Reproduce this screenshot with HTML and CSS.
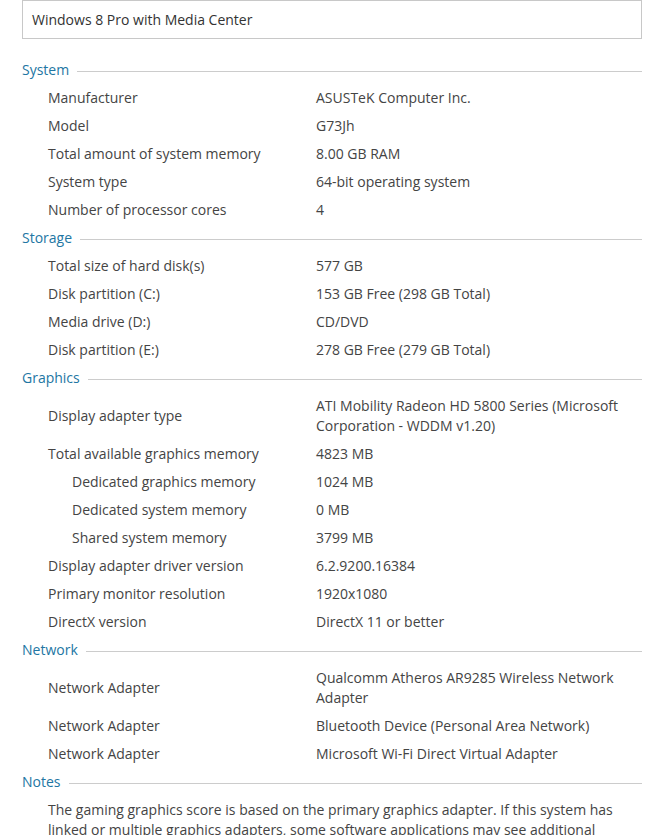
FILE: index.html
```html
<!DOCTYPE html>
<html>
<head>
<meta charset="utf-8">
<link rel="stylesheet" href="styles.css">
</head>
<body>
<div class="page">
  <div class="edition">Windows 8 Pro with Media Center</div>

  <section class="group">
    <div class="group-head"><span>System</span><i></i></div>
    <div class="row"><div class="k">Manufacturer</div><div class="v">ASUSTeK Computer Inc.</div></div>
    <div class="row"><div class="k">Model</div><div class="v">G73Jh</div></div>
    <div class="row"><div class="k">Total amount of system memory</div><div class="v">8.00 GB RAM</div></div>
    <div class="row"><div class="k">System type</div><div class="v">64-bit operating system</div></div>
    <div class="row"><div class="k">Number of processor cores</div><div class="v">4</div></div>
  </section>

  <section class="group">
    <div class="group-head"><span>Storage</span><i></i></div>
    <div class="row"><div class="k">Total size of hard disk(s)</div><div class="v">577 GB</div></div>
    <div class="row"><div class="k">Disk partition (C:)</div><div class="v">153 GB Free (298 GB Total)</div></div>
    <div class="row"><div class="k">Media drive (D:)</div><div class="v">CD/DVD</div></div>
    <div class="row"><div class="k">Disk partition (E:)</div><div class="v">278 GB Free (279 GB Total)</div></div>
  </section>

  <section class="group">
    <div class="group-head"><span>Graphics</span><i></i></div>
    <div class="row"><div class="k">Display adapter type</div><div class="v">ATI Mobility Radeon HD 5800 Series (Microsoft Corporation - WDDM v1.20)</div></div>
    <div class="row"><div class="k">Total available graphics memory</div><div class="v">4823 MB</div></div>
    <div class="row sub"><div class="k">Dedicated graphics memory</div><div class="v">1024 MB</div></div>
    <div class="row sub"><div class="k">Dedicated system memory</div><div class="v">0 MB</div></div>
    <div class="row sub"><div class="k">Shared system memory</div><div class="v">3799 MB</div></div>
    <div class="row"><div class="k">Display adapter driver version</div><div class="v">6.2.9200.16384</div></div>
    <div class="row"><div class="k">Primary monitor resolution</div><div class="v">1920x1080</div></div>
    <div class="row"><div class="k">DirectX version</div><div class="v">DirectX 11 or better</div></div>
  </section>

  <section class="group">
    <div class="group-head"><span>Network</span><i></i></div>
    <div class="row"><div class="k">Network Adapter</div><div class="v">Qualcomm Atheros AR9285 Wireless Network Adapter</div></div>
    <div class="row"><div class="k">Network Adapter</div><div class="v">Bluetooth Device (Personal Area Network)</div></div>
    <div class="row"><div class="k">Network Adapter</div><div class="v">Microsoft Wi-Fi Direct Virtual Adapter</div></div>
  </section>

  <section class="group">
    <div class="group-head"><span>Notes</span><i></i></div>
    <p class="note">The gaming graphics score is based on the primary graphics adapter. If this system has linked or multiple graphics adapters, some software applications may see additional graphics memory.</p>
  </section>
</div>
</body>
</html>
```

FILE: styles.css
```css
html, body {
  margin: 0;
  padding: 0;
  background: #ffffff;
}
body {
  font-family: "Open Sans", "Noto Sans", sans-serif;
  font-size: 14px;
  line-height: 20px;
  color: #444444;
}
.page {
  width: 620px;
  margin-left: 22px;
}
.edition {
  height: 37px;
  border: 1px solid #c8c8c8;
  padding: 0 9px;
  display: flex;
  align-items: center;
  color: #333333;
  margin-bottom: 17px;
}
.group-head {
  height: 28px;
  display: flex;
  align-items: center;
  gap: 8px;
  color: #2276a3;
}
.group-head i {
  flex: 1;
  height: 1px;
  background: #cccccc;
  margin-top: 2px;
}
.row {
  display: grid;
  grid-template-columns: 268px 1fr;
  align-items: center;
  padding: 4px 0 4px 26px;
}
.row.sub .k {
  padding-left: 24px;
}
.note {
  margin: 0;
  padding: 4px 0 0 26px;
}
```
